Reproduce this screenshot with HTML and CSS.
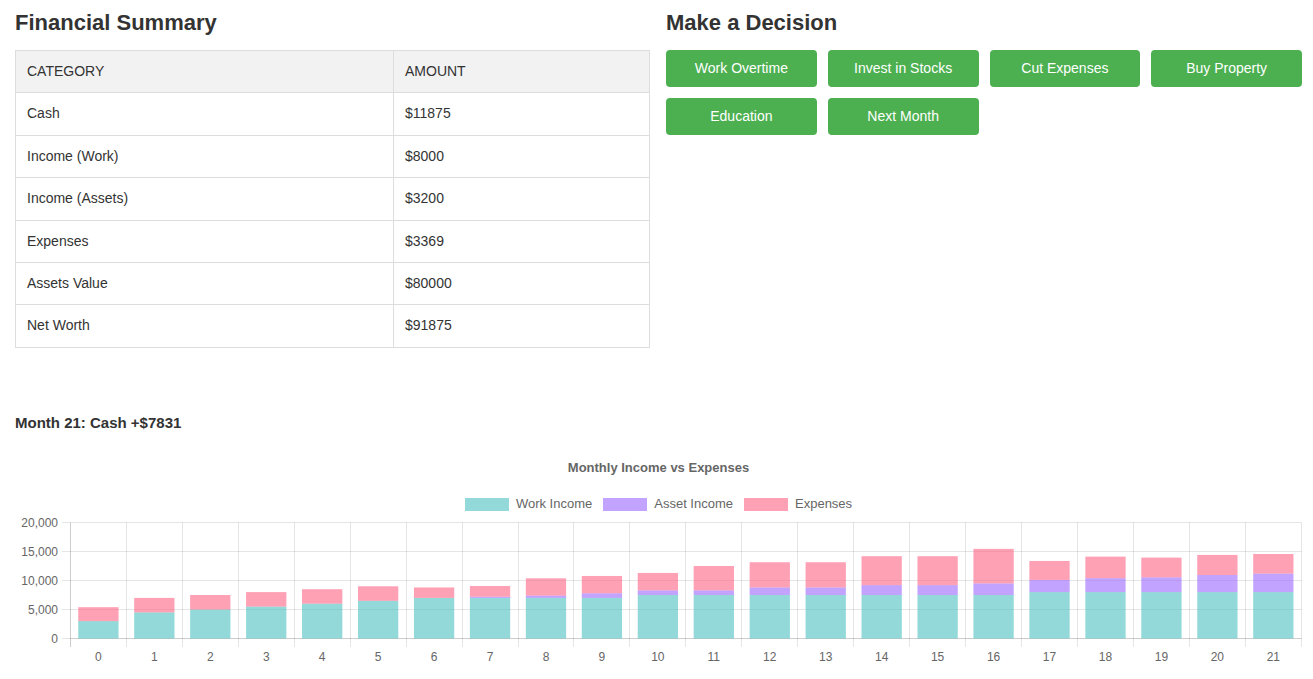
FILE: index.html
```html
<!DOCTYPE html>
<html lang="en">
<head>
<meta charset="utf-8">
<title>Financial Game</title>
<link rel="stylesheet" href="styles.css">
</head>
<body>
<div class="page">
  <div class="top">
    <section class="col">
      <h2 class="heading">Financial Summary</h2>
      <table class="summary">
        <colgroup><col class="c1"><col class="c2"></colgroup>
        <thead>
          <tr><th>Category</th><th>Amount</th></tr>
        </thead>
        <tbody>
          <tr><td>Cash</td><td>$11875</td></tr>
          <tr><td>Income (Work)</td><td>$8000</td></tr>
          <tr><td>Income (Assets)</td><td>$3200</td></tr>
          <tr><td>Expenses</td><td>$3369</td></tr>
          <tr><td>Assets Value</td><td>$80000</td></tr>
          <tr><td>Net Worth</td><td>$91875</td></tr>
        </tbody>
      </table>
    </section>
    <section class="col">
      <h2 class="heading">Make a Decision</h2>
      <div class="actions">
        <button class="btn">Work Overtime</button>
        <button class="btn">Invest in Stocks</button>
        <button class="btn">Cut Expenses</button>
        <button class="btn">Buy Property</button>
        <button class="btn">Education</button>
        <button class="btn">Next Month</button>
      </div>
    </section>
  </div>
  <div class="status">Month 21: Cash +$7831</div>
  <div class="chart">
    <div class="chart-title">Monthly Income vs Expenses</div>
    <div class="legend">
      <span class="legend-item"><span class="swatch work"></span>Work Income</span>
      <span class="legend-item"><span class="swatch asset"></span>Asset Income</span>
      <span class="legend-item"><span class="swatch exp"></span>Expenses</span>
    </div>
    <svg id="plot" class="plot" width="1287" height="165" viewBox="0 0 1287 165"></svg>
  </div>
</div>
<script src="script.js"></script>
</body>
</html>
```
FILE: styles.css
```css
* { box-sizing: border-box; }
html, body { margin: 0; padding: 0; background: #fff; }
body {
  font-family: "Liberation Sans", Arial, Helvetica, sans-serif;
  color: #333;
  font-size: 14px;
  overflow: hidden;
}
.page { padding: 0 11px 0 15px; }
.top {
  display: grid;
  grid-template-columns: 635px 1fr;
  column-gap: 16px;
  align-items: start;
}
.heading {
  font-size: 22px;
  line-height: 25px;
  font-weight: bold;
  margin: 10px 0 15px;
  color: #333;
}
.summary {
  width: 100%;
  border-collapse: collapse;
  table-layout: fixed;
  border: 1px solid #ddd;
}
.summary .c1 { width: 378px; }
.summary th, .summary td {
  border: 1px solid #ddd;
  padding: 12px 11px;
  line-height: 17.4px;
  text-align: left;
  font-size: 14px;
  font-weight: normal;
  color: #333;
}
.summary th {
  background: #f2f2f2;
  text-transform: uppercase;
}
.actions {
  display: grid;
  grid-template-columns: repeat(4, 1fr);
  gap: 11px;
}
.btn {
  height: 37px;
  border: none;
  border-radius: 4px;
  background: #4caf50;
  color: #fff;
  font-family: "Liberation Sans", Arial, sans-serif;
  font-size: 14px;
  padding: 0 0 1px;
}
.status {
  margin-top: 66px;
  font-size: 15px;
  line-height: 17px;
  font-weight: bold;
  color: #333;
}
.chart { margin-top: 29px; }
.chart-title {
  text-align: center;
  font-size: 13px;
  line-height: 16px;
  font-weight: bold;
  color: #666;
}
.legend {
  margin-top: 20px;
  height: 16px;
  display: flex;
  justify-content: center;
  align-items: center;
  gap: 11px;
  font-size: 13px;
  color: #666;
}
.legend-item {
  display: inline-flex;
  align-items: center;
  gap: 7px;
  line-height: 16px;
}
.swatch {
  display: inline-block;
  width: 44px;
  height: 13px;
  margin-top: 2px;
}
.swatch.work { background: #93d9d9; }
.swatch.asset { background: #c2a3ff; }
.swatch.exp { background: #ffa1b5; }
.plot { display: block; }
.plot text {
  font-family: "Liberation Sans", Arial, sans-serif;
  font-size: 12px;
  fill: #666;
}
```
FILE: script.js
```js
(function () {
  var work = [3000,4500,5000,5500,6000,6500,7000,7000,7000,7000,7500,7500,7500,7500,7500,7500,7500,8000,8000,8000,8000,8000];
  var asset = [0,0,0,0,0,0,0,200,400,800,800,800,1300,1300,1700,1700,2000,2100,2400,2550,2950,3200];
  var exp = [2400,2500,2500,2500,2500,2500,1800,1850,2980,2980,3000,4200,4350,4350,4990,4990,5950,3270,3720,3400,3460,3369];
  var NS = 'http://www.w3.org/2000/svg';
  var svg = document.getElementById('plot');
  var left = 55.4, step = 55.95, top = 10.5, zero = 126.5, per = 116 / 20000;
  var n = work.length;
  var right = left + n * step;
  function el(tag, attrs, text) {
    var e = document.createElementNS(NS, tag);
    for (var k in attrs) e.setAttribute(k, attrs[k]);
    if (text !== undefined) e.textContent = text;
    svg.appendChild(e);
    return e;
  }
  function px(x) { return Math.round(x - 0.5) + 0.5; }
  var grid = 'rgba(0,0,0,0.1)';
  for (var v = 0; v <= 20000; v += 5000) {
    var y = px(zero - v * per);
    el('line', {x1: 47, x2: px(right), y1: y, y2: y, stroke: grid, 'stroke-width': 1});
    el('text', {x: 43, y: y + 4, 'text-anchor': 'end'}, v.toLocaleString('en-US'));
  }
  for (var k = 0; k <= n; k++) {
    var x = px(left + k * step);
    el('line', {x1: x, x2: x, y1: top, y2: zero + 8.5, stroke: grid, 'stroke-width': 1});
  }
  el('line', {x1: px(left), x2: px(left), y1: top, y2: zero + 8.5, stroke: grid, 'stroke-width': 1});
  el('line', {x1: px(left), x2: px(right), y1: zero, y2: zero, stroke: grid, 'stroke-width': 1});
  var bw = step * 0.72;
  for (var i = 0; i < n; i++) {
    var cx = left + (i + 0.5) * step;
    var bx = cx - bw / 2;
    var base = 0;
    var parts = [[work[i], 'rgba(75,192,192,0.6)'], [asset[i], 'rgba(153,102,255,0.6)'], [exp[i], 'rgba(255,99,132,0.6)']];
    for (var p = 0; p < parts.length; p++) {
      var val = parts[p][0];
      if (val > 0) {
        var y1 = zero - (base + val) * per;
        var y0 = zero - base * per;
        el('rect', {x: bx, y: y1, width: bw, height: y0 - y1, fill: parts[p][1]});
      }
      base += val;
    }
    el('text', {x: cx, y: 149, 'text-anchor': 'middle'}, String(i));
  }
})();
```
